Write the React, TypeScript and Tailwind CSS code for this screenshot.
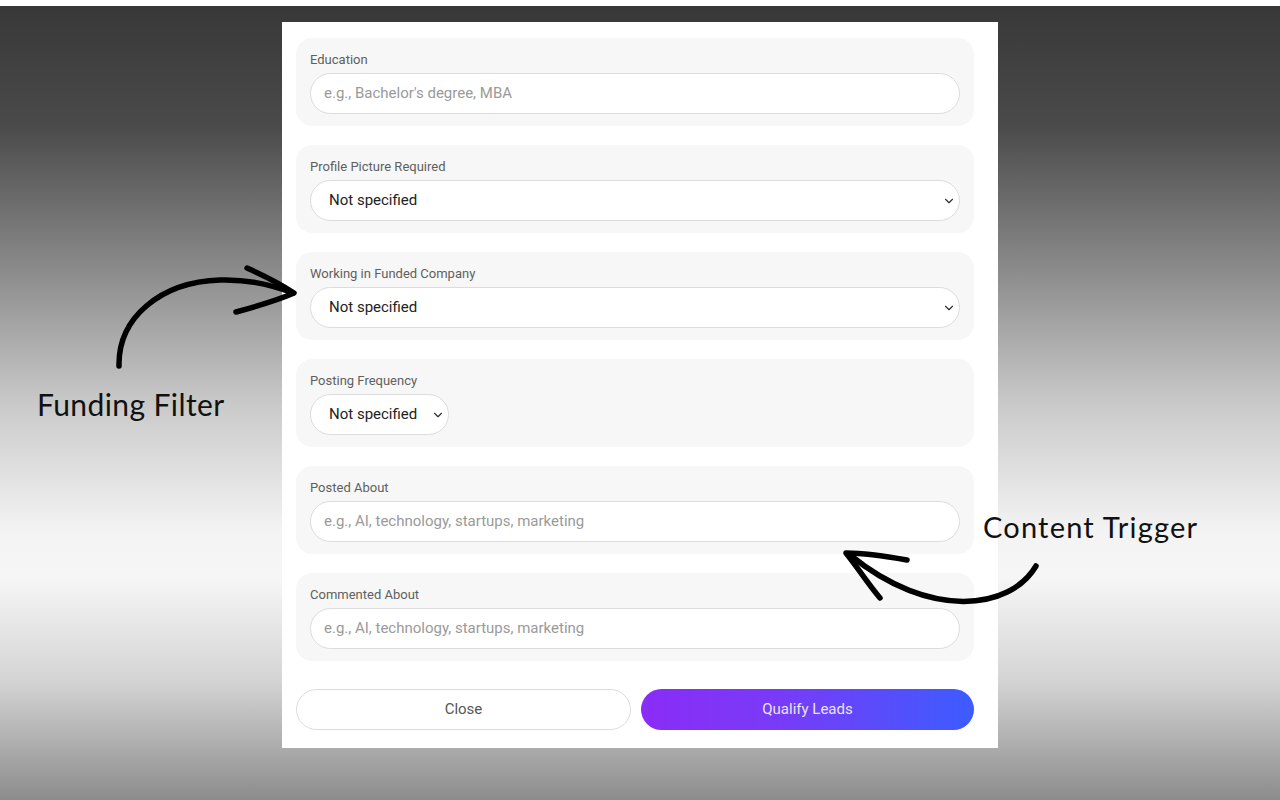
import { ChevronDown } from 'lucide-react';

const font = { fontFamily: 'Roboto, "Noto Sans", sans-serif' };

function Field({ label, children }: { label: string; children: React.ReactNode }) {
  return (
    <div className="rounded-2xl bg-[#f6f7f6] px-[14px] pt-[14px] pb-[12px]">
      <div className="text-[13px] leading-[16px] text-[#5f5f5f] mb-[5px]">{label}</div>
      {children}
    </div>
  );
}

function TextBox({ placeholder }: { placeholder: string }) {
  return (
    <div className="h-[41px] w-full rounded-full border border-[#dcdcdc] bg-white px-[13px] flex items-center text-[15px] text-[#9a9a9a]">
      {placeholder}
    </div>
  );
}

function Select({ wide = true }: { wide?: boolean }) {
  return (
    <div
      className={
        'h-[41px] rounded-full border border-[#dcdcdc] bg-white pl-[18px] flex items-center justify-between text-[15px] text-[#222] ' +
        (wide ? 'w-full pr-[3px]' : 'w-[139px] pr-[3px]')
      }
    >
      <span>Not specified</span>
      <ChevronDown size={14} strokeWidth={1.9} className="text-[#2a2a2a]" />
    </div>
  );
}

export default function App() {
  return (
    <div className="w-[1280px] h-[800px] overflow-hidden flex flex-col bg-white" style={font}>
      <div className="h-[6px] bg-white" />
      <div className="relative flex-1 bg-[linear-gradient(180deg,#383838_0%,#4a4a4a_15%,#8a8a8a_33%,#c9c9c9_50%,#f3f3f3_66%,#f6f6f6_72%,#d4d4d4_85%,#8c8c8c_100%)]">
        {/* annotation arrows */}
        <svg className="absolute left-0 top-0" width="1280" height="794" viewBox="0 6 1280 794">
          <g fill="none" stroke="#000" strokeWidth="5.5" strokeLinecap="round" strokeLinejoin="round">
            <path d="M119 366 C 118 318, 160 282, 220 280 C 250 279, 275 286, 293 293" />
            <path d="M247 268 C 265 276, 282 285, 294 293 C 278 300, 258 306, 236 312" />
            <path d="M1036 566 C 1010 610, 930 620, 850 555" />
            <path d="M907 560 C 885 556, 862 553, 846 553 C 858 568, 868 584, 880 598" />
          </g>
        </svg>
        <div className="absolute left-[37px] top-[380px] text-[30px] leading-[36px] text-[#111] tracking-[0.4px]" style={{ fontFamily: 'Lato, sans-serif' }}>
          Funding Filter
        </div>
        <div className="absolute left-[983px] top-[503px] text-[29px] leading-[36px] text-[#111] tracking-[1.2px]" style={{ fontFamily: 'Lato, sans-serif' }}>
          Content Trigger
        </div>

        <div className="ml-[282px] mt-[16px] w-[716px] h-[726px] bg-white pl-[14px] pr-[24px] pt-[16px] flex flex-col">
          <div className="flex flex-col gap-[19px]">
            <Field label="Education">
              <TextBox placeholder="e.g., Bachelor's degree, MBA" />
            </Field>
            <Field label="Profile Picture Required">
              <Select />
            </Field>
            <Field label="Working in Funded Company">
              <Select />
            </Field>
            <Field label="Posting Frequency">
              <Select wide={false} />
            </Field>
            <Field label="Posted About">
              <TextBox placeholder="e.g., AI, technology, startups, marketing" />
            </Field>
            <Field label="Commented About">
              <TextBox placeholder="e.g., AI, technology, startups, marketing" />
            </Field>
          </div>
          <div className="mt-[28px] flex gap-[10px]">
            <button className="h-[41px] w-[335px] rounded-full border border-[#dcdcdc] bg-white text-[15px] text-[#555]">
              Close
            </button>
            <button className="h-[41px] flex-1 rounded-full bg-[linear-gradient(90deg,#8a2cf6_0%,#7a3af7_40%,#3c5cff_100%)] text-[15px] text-[#e9e4ff]">
              Qualify Leads
            </button>
          </div>
        </div>
      </div>
    </div>
  );
}
